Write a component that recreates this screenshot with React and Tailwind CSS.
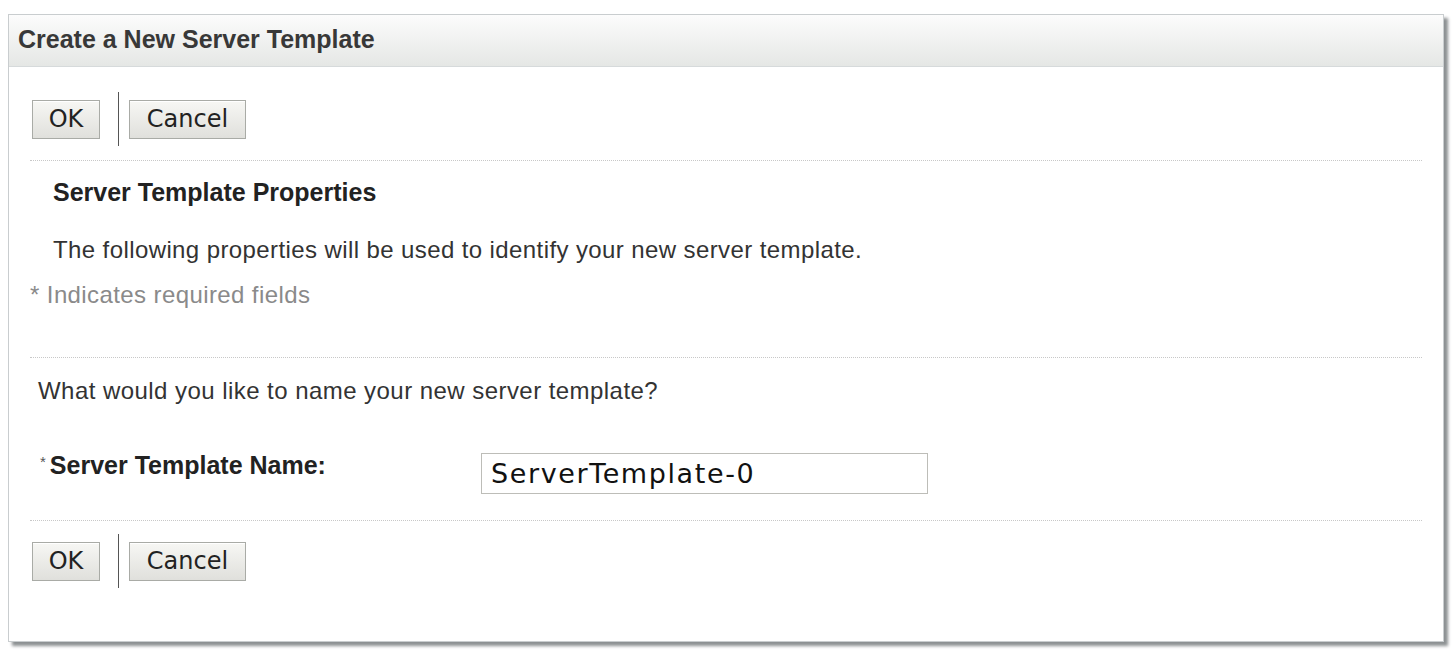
const SANS = { fontFamily: '"Liberation Sans", Arial, sans-serif' }
const DEJAVU = { fontFamily: '"DejaVu Sans", sans-serif' }

function Btn({ children, w }) {
  return (
    <button
      className={`flex h-[39px] ${w} items-center justify-center border border-[#a9aba6] bg-gradient-to-b from-[#f7f7f4] to-[#e0e0dc] text-[24px] leading-none text-[#222] shadow-[inset_0_1px_0_#fff]`}
      style={DEJAVU}
    >
      {children}
    </button>
  )
}

function ButtonRow() {
  return (
    <div className="flex items-center pl-[23px]">
      <Btn w="w-[68px]">OK</Btn>
      <div className="ml-[18px] h-[54px] w-px bg-[#555]" />
      <div className="ml-[10px]">
        <Btn w="w-[117px]">Cancel</Btn>
      </div>
    </div>
  )
}

const Dotted = () => <div className="mx-[21px] border-t border-dotted border-[#c8c8c8]" />

export default function App() {
  return (
    <div className="h-[659px] w-[1455px] bg-white pl-[8px] pt-[14px]" style={SANS}>
      <div className="flex h-[628px] w-[1436px] flex-col border border-[#c9cdcf] bg-white shadow-[4px_4px_3px_#8d9193]">
        <div className="flex h-[52px] items-center border-b border-[#d6dadb] bg-gradient-to-b from-[#fcfcfc] to-[#e5e7e5] pb-[3px] pl-[9px]">
          <h1 className="text-[25px] leading-[25px] font-bold text-[#383838]">Create a New Server Template</h1>
        </div>

        <div className="pt-[25px]">
          <ButtonRow />
        </div>
        <div className="pt-[14px]">
          <Dotted />
        </div>

        <div className="pl-[44px] pt-[19px]">
          <h2 className="text-[25px] leading-[25px] font-bold text-[#222]">Server Template Properties</h2>
          <p className="pt-[33px] text-[24px] leading-[24px] tracking-[0.4px] text-[#333]">
            The following properties will be used to identify your new server template.
          </p>
        </div>
        <p className="pl-[21px] pt-[21px] text-[24px] leading-[24px] tracking-[0.4px] text-[#8a8a8a]">
          * Indicates required fields
        </p>

        <div className="pt-[50px]">
          <Dotted />
        </div>

        <p className="pl-[29px] pt-[21px] text-[24px] leading-[24px] tracking-[0.45px] text-[#333]">
          What would you like to name your new server template?
        </p>

        <div className="flex items-start pl-[31px] pt-[50px]">
          <label className="flex w-[441px] items-start text-[25px] leading-[24px] font-bold text-[#222]">
            <span className="mr-[4px] pt-[1px] text-[15px] leading-[15px] font-normal text-[#555]">*</span>
            Server Template Name:
          </label>
          <div
            className="flex h-[41px] w-[447px] items-center border border-[#bdbdb8] bg-white pl-[9px] text-[27px] leading-[27px] tracking-[1.6px] text-[#111]"
            style={DEJAVU}
          >
            ServerTemplate-0
          </div>
        </div>

        <div className="pt-[26px]">
          <Dotted />
        </div>
        <div className="pt-[13px]">
          <ButtonRow />
        </div>
      </div>
    </div>
  )
}
